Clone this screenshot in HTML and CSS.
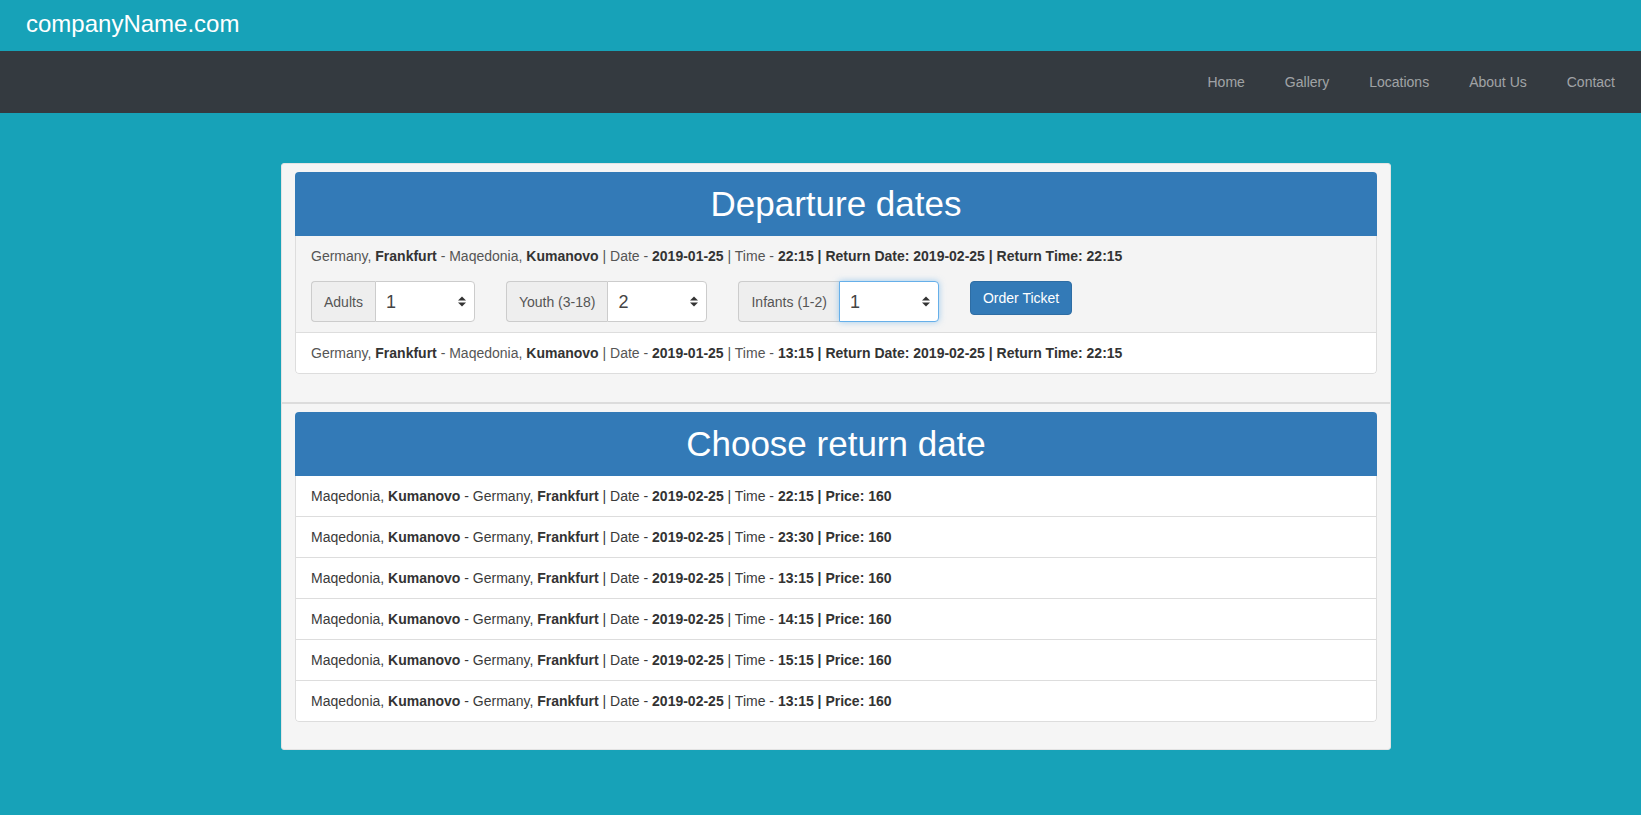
FILE: index.html
```html
<!DOCTYPE html>
<html lang="en">
<head>
<meta charset="utf-8">
<title>companyName.com</title>
<link rel="stylesheet" href="styles.css">
</head>
<body>
<header class="brandbar">
  <span class="brand">companyName.com</span>
</header>
<nav class="navbar">
  <ul class="nav-links">
    <li><a href="#">Home</a></li>
    <li><a href="#">Gallery</a></li>
    <li><a href="#">Locations</a></li>
    <li><a href="#">About Us</a></li>
    <li><a href="#">Contact</a></li>
  </ul>
</nav>
<main class="container">
  <div class="board">
    <section class="section">
      <div class="panel">
        <div class="panel-heading"><h1>Departure dates</h1></div>
        <div class="item item-active">
          <div class="item-text">Germany, <b>Frankfurt</b> - Maqedonia, <b>Kumanovo</b> | Date - <b>2019-01-25</b> | Time - <b>22:15 | Return Date: 2019-02-25 | Return Time: 22:15</b></div>
          <form class="order-form">
            <div class="input-group">
              <span class="addon">Adults</span>
              <div class="select-wrap">
                <select class="select"><option>1</option></select>
                <svg class="select-arrow" width="8" height="11" viewBox="0 0 8 11"><path d="M0 4.5 L4 0.5 L8 4.5 Z M0 6.5 L8 6.5 L4 10.5 Z" fill="#333"/></svg>
              </div>
            </div>
            <div class="input-group">
              <span class="addon">Youth (3-18)</span>
              <div class="select-wrap">
                <select class="select"><option>2</option></select>
                <svg class="select-arrow" width="8" height="11" viewBox="0 0 8 11"><path d="M0 4.5 L4 0.5 L8 4.5 Z M0 6.5 L8 6.5 L4 10.5 Z" fill="#333"/></svg>
              </div>
            </div>
            <div class="input-group">
              <span class="addon">Infants (1-2)</span>
              <div class="select-wrap">
                <select class="select is-focused"><option>1</option></select>
                <svg class="select-arrow" width="8" height="11" viewBox="0 0 8 11"><path d="M0 4.5 L4 0.5 L8 4.5 Z M0 6.5 L8 6.5 L4 10.5 Z" fill="#333"/></svg>
              </div>
            </div>
            <button type="button" class="btn">Order Ticket</button>
          </form>
        </div>
        <div class="item">
          <div class="item-text">Germany, <b>Frankfurt</b> - Maqedonia, <b>Kumanovo</b> | Date - <b>2019-01-25</b> | Time - <b>13:15 | Return Date: 2019-02-25 | Return Time: 22:15</b></div>
        </div>
      </div>
    </section>
    <section class="section section-last">
      <div class="panel">
        <div class="panel-heading"><h1>Choose return date</h1></div>
        <div class="item item-dark"><div class="item-text">Maqedonia, <b>Kumanovo</b> - Germany, <b>Frankfurt</b> | Date - <b>2019-02-25</b> | Time - <b>22:15 | Price: 160</b></div></div>
        <div class="item item-dark"><div class="item-text">Maqedonia, <b>Kumanovo</b> - Germany, <b>Frankfurt</b> | Date - <b>2019-02-25</b> | Time - <b>23:30 | Price: 160</b></div></div>
        <div class="item item-dark"><div class="item-text">Maqedonia, <b>Kumanovo</b> - Germany, <b>Frankfurt</b> | Date - <b>2019-02-25</b> | Time - <b>13:15 | Price: 160</b></div></div>
        <div class="item item-dark"><div class="item-text">Maqedonia, <b>Kumanovo</b> - Germany, <b>Frankfurt</b> | Date - <b>2019-02-25</b> | Time - <b>14:15 | Price: 160</b></div></div>
        <div class="item item-dark"><div class="item-text">Maqedonia, <b>Kumanovo</b> - Germany, <b>Frankfurt</b> | Date - <b>2019-02-25</b> | Time - <b>15:15 | Price: 160</b></div></div>
        <div class="item item-dark"><div class="item-text">Maqedonia, <b>Kumanovo</b> - Germany, <b>Frankfurt</b> | Date - <b>2019-02-25</b> | Time - <b>13:15 | Price: 160</b></div></div>
      </div>
    </section>
  </div>
</main>
</body>
</html>
```
FILE: styles.css
```css
* { box-sizing: border-box; }

html, body {
  margin: 0;
  padding: 0;
}

body {
  background: #17a2b8;
  font-family: "Liberation Sans", Arial, Helvetica, sans-serif;
  font-size: 14px;
  line-height: 20px;
  color: #333;
  min-height: 815px;
}

.brandbar {
  height: 51px;
  padding: 12px 0 0 26px;
}

.brand {
  display: block;
  color: #fff;
  font-size: 24px;
  line-height: 24px;
}

.navbar {
  height: 62px;
  background: #343a40;
  display: flex;
  justify-content: flex-end;
  align-items: center;
  padding-right: 6px;
}

.nav-links {
  list-style: none;
  margin: 0;
  padding: 0;
  display: flex;
}

.nav-links a {
  display: block;
  padding: 0 20px;
  color: rgba(255, 255, 255, 0.55);
  text-decoration: none;
  font-size: 14px;
  line-height: 20px;
}

.container {
  width: 1140px;
  margin: 50px auto 0;
}

.board {
  width: 1110px;
  margin-left: 30.5px;
  background: #f5f5f5;
  border: 1px solid #e3e3e3;
  border-radius: 3px;
}

.section {
  padding: 8px 13px 8px 13px;
}

.section + .section {
  border-top: 2px solid #dcdcdc;
}

.section-last {
  padding-bottom: 7px;
}

.panel {
  margin-bottom: 20px;
  border-radius: 4px;
  overflow: hidden;
  background: #fff;
}

.panel-heading {
  height: 64px;
  background: #337ab7;
  display: flex;
  align-items: center;
  justify-content: center;
}

.panel-heading h1 {
  margin: 0;
  color: #fff;
  font-size: 35px;
  font-weight: normal;
  line-height: 38px;
}

.item {
  padding: 10px 15px;
  border: 1px solid #ddd;
  border-top: 0;
  background: #fff;
  color: #555;
}

.item:last-child {
  border-radius: 0 0 4px 4px;
}

.item-active {
  background: #f4f4f4;
}

.item-dark {
  color: #3a3a3a;
}

.item b {
  color: #333;
}

.order-form {
  display: flex;
  align-items: flex-start;
  gap: 31px;
  margin-top: 15px;
}

.input-group {
  display: flex;
  height: 41px;
}

.addon {
  display: flex;
  align-items: center;
  padding: 0 12px;
  background: #eee;
  border: 1px solid #ccc;
  border-right: 0;
  border-radius: 4px 0 0 4px;
  color: #555;
  font-size: 14px;
}

.select-wrap {
  position: relative;
  width: 100px;
  height: 41px;
}

.select {
  -webkit-appearance: none;
  appearance: none;
  width: 100%;
  height: 100%;
  margin: 0;
  padding: 0 24px 0 10px;
  border: 1px solid #ccc;
  border-radius: 0 4px 4px 0;
  background: #fff;
  color: #444;
  font-family: "Liberation Sans", Arial, Helvetica, sans-serif;
  font-size: 18px;
  outline: none;
}

.select.is-focused {
  border-color: #66afe9;
  box-shadow: 0 0 6px rgba(102, 175, 233, 0.6);
}

.select-arrow {
  position: absolute;
  right: 9px;
  top: 15px;
  pointer-events: none;
}

.btn {
  height: 34px;
  padding: 6px 12px;
  background: #337ab7;
  border: 1px solid #2e6da4;
  border-radius: 4px;
  color: #fff;
  font-family: "Liberation Sans", Arial, Helvetica, sans-serif;
  font-size: 14px;
  line-height: 20px;
  cursor: pointer;
}
```
